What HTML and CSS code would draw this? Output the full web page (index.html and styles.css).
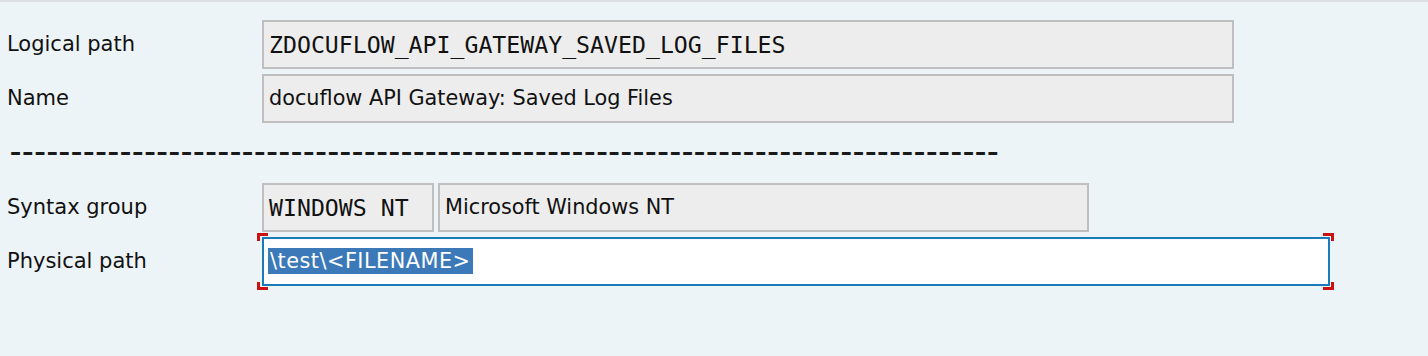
FILE: index.html
```html
<!DOCTYPE html>
<html>
<head>
<meta charset="utf-8">
<link rel="stylesheet" href="styles.css">
</head>
<body>
<div class="topline"></div>
<div class="form">
  <div class="row">
    <div class="label">Logical path</div>
    <div class="field mono w-wide">ZDOCUFLOW_API_GATEWAY_SAVED_LOG_FILES</div>
  </div>
  <div class="row">
    <div class="label">Name</div>
    <div class="field w-wide">docuflow API Gateway: Saved Log Files</div>
  </div>
  <div class="sep"><span class="dashes">---------------------------------------------------------------------------------</span></div>
  <div class="row">
    <div class="label">Syntax group</div>
    <div class="field mono w-code">WINDOWS NT</div>
    <div class="field w-desc">Microsoft Windows NT</div>
  </div>
  <div class="row">
    <div class="label">Physical path</div>
    <div class="focus-wrap">
      <div class="field input w-path"><span class="sel">\test\&lt;FILENAME&gt;</span></div>
      <span class="corner tl"></span>
      <span class="corner tr"></span>
      <span class="corner bl"></span>
      <span class="corner br"></span>
    </div>
  </div>
</div>
</body>
</html>
```

FILE: styles.css
```css
html, body {
  margin: 0;
  padding: 0;
}
body {
  background: #edf4f7;
  width: 1428px;
  height: 356px;
  overflow: hidden;
  font-family: "DejaVu Sans", sans-serif;
  font-size: 20.8px;
  color: #111;
}
.topline {
  height: 2px;
  background: #dcdfe4;
}
.form {
  padding-top: 18px;
  display: flex;
  flex-direction: column;
  gap: 5px;
}
.row {
  display: flex;
  align-items: center;
  height: 49px;
  gap: 4px;
}
.label {
  width: 262px;
  padding-left: 7px;
  box-sizing: border-box;
  margin-right: -4px;
  line-height: 49px;
  white-space: nowrap;
  font-size: 21px;
}
.field {
  box-sizing: border-box;
  height: 49px;
  line-height: 45px;
  border: 2px solid #bfbfbf;
  background: #ededed;
  padding-left: 5px;
  white-space: nowrap;
  overflow: hidden;
}
.mono {
  font-family: "DejaVu Sans Mono", monospace;
  font-size: 23.2px;
}
.w-wide { width: 972px; }
.w-code { width: 172px; }
.w-desc { width: 651px; }
.w-path { width: 1068px; }
.sep {
  height: 49px;
  line-height: 49px;
  padding-left: 7px;
  padding-top: 1px;
  white-space: nowrap;
}
.dashes {
  display: inline-block;
  font-family: "DejaVu Sans Mono", monospace;
  font-weight: bold;
  font-size: 20.4px;
  letter-spacing: -3.5px;
  transform: scaleX(1.392);
  transform-origin: left center;
  color: #1a1a1a;
}
.focus-wrap {
  position: relative;
}
.input {
  background: #ffffff;
  border-color: #1b7bb8;
  padding-left: 4px;
}
.sel {
  background: #3b79b9;
  color: #ffffff;
  padding: 1px 2px 1px 2px;
  letter-spacing: 0.5px;
}
.corner {
  position: absolute;
  width: 8px;
  height: 5px;
  border-color: #cc1111;
  border-style: solid;
  border-width: 0;
}
.tl { left: -5px; top: -4px; border-left-width: 3px; border-top-width: 3px; }
.tr { right: -4px; top: -4px; border-right-width: 3px; border-top-width: 3px; }
.bl { left: -5px; bottom: -4px; border-left-width: 3px; border-bottom-width: 3px; }
.br { right: -4px; bottom: -4px; border-right-width: 3px; border-bottom-width: 3px; }
```
